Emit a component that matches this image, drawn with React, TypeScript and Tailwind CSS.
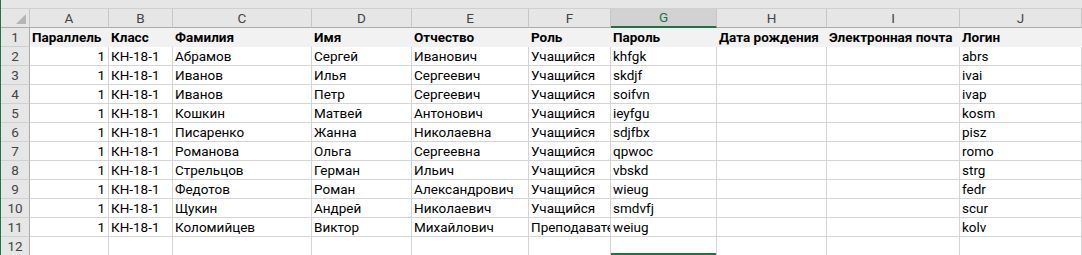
import React from 'react';

const cols = [
  { letter: 'A', w: 'w-[79px]', title: 'Параллель', right: true },
  { letter: 'B', w: 'w-[64px]', title: 'Класс' },
  { letter: 'C', w: 'w-[139px]', title: 'Фамилия' },
  { letter: 'D', w: 'w-[100px]', title: 'Имя' },
  { letter: 'E', w: 'w-[117px]', title: 'Отчество' },
  { letter: 'F', w: 'w-[82px]', title: 'Роль' },
  { letter: 'G', w: 'w-[106px]', title: 'Пароль', selected: true },
  { letter: 'H', w: 'w-[110px]', title: 'Дата рождения' },
  { letter: 'I', w: 'w-[133px]', title: 'Электронная почта' },
  { letter: 'J', w: 'w-[122px]', title: 'Логин' },
];

const rows = [
  ['1', 'КН-18-1', 'Абрамов', 'Сергей', 'Иванович', 'Учащийся', 'khfgk', '', '', 'abrs'],
  ['1', 'КН-18-1', 'Иванов', 'Илья', 'Сергеевич', 'Учащийся', 'skdjf', '', '', 'ivai'],
  ['1', 'КН-18-1', 'Иванов', 'Петр', 'Сергеевич', 'Учащийся', 'soifvn', '', '', 'ivap'],
  ['1', 'КН-18-1', 'Кошкин', 'Матвей', 'Антонович', 'Учащийся', 'ieyfgu', '', '', 'kosm'],
  ['1', 'КН-18-1', 'Писаренко', 'Жанна', 'Николаевна', 'Учащийся', 'sdjfbx', '', '', 'pisz'],
  ['1', 'КН-18-1', 'Романова', 'Ольга', 'Сергеевна', 'Учащийся', 'qpwoc', '', '', 'romo'],
  ['1', 'КН-18-1', 'Стрельцов', 'Герман', 'Ильич', 'Учащийся', 'vbskd', '', '', 'strg'],
  ['1', 'КН-18-1', 'Федотов', 'Роман', 'Александрович', 'Учащийся', 'wieug', '', '', 'fedr'],
  ['1', 'КН-18-1', 'Щукин', 'Андрей', 'Николаевич', 'Учащийся', 'smdvfj', '', '', 'scur'],
  ['1', 'КН-18-1', 'Коломийцев', 'Виктор', 'Михайлович', 'Преподаватель', 'weiug', '', '', 'kolv'],
  ['', '', '', '', '', '', '', '', '', ''],
];

function RowNum({ n }: { n: number }) {
  return (
    <div className="w-[29px] h-[19px] shrink-0 bg-[#e6e6e6] border-r border-b border-r-[#ababab] border-b-[#d0d0d0] text-center leading-[18px] text-[#444444]">
      {n}
    </div>
  );
}

export default function App() {
  return (
    <div className="w-[1082px] h-[255px] overflow-hidden bg-white border-l border-[#217346] font-['Roboto',sans-serif] text-[13.5px] text-black">
      {/* top strip */}
      <div className="h-[9px] bg-[#e6e6e6] border-b border-[#d0d0d0]" />

      {/* column letters */}
      <div className="flex h-[19px]">
        <div className="w-[29px] h-[19px] shrink-0 bg-[#e6e6e6] border-r border-b border-r-[#c6c6c6] border-b-[#ababab] flex items-end justify-end">
          <svg width="12" height="12" viewBox="0 0 12 12" className="mr-[2px] mb-[2px]">
            <polygon points="1,11 11,1 11,11" fill="#b5b5b5" />
          </svg>
        </div>
        {cols.map((c) =>
          c.selected ? (
            <div
              key={c.letter}
              className={`${c.w} h-[19px] shrink-0 bg-[#d2d2d2] border-r border-r-[#c6c6c6] border-b-2 border-b-[#217346] text-center leading-[17px] text-[#217346]`}
            >
              {c.letter}
            </div>
          ) : (
            <div
              key={c.letter}
              className={`${c.w} h-[19px] shrink-0 bg-[#e6e6e6] border-r border-b border-r-[#c6c6c6] border-b-[#ababab] text-center leading-[18px] text-[#444444]`}
            >
              {c.letter}
            </div>
          )
        )}
      </div>

      {/* header row 1 */}
      <div className="flex h-[19px]">
        <RowNum n={1} />
        {cols.map((c) => (
          <div
            key={c.letter}
            className={`${c.w} h-[19px] shrink-0 bg-[#f2f2f2] pl-[2px] font-bold leading-[19px] whitespace-nowrap overflow-hidden`}
          >
            {c.title}
          </div>
        ))}
      </div>

      {/* data rows */}
      {rows.map((r, i) => (
        <div key={i} className="flex h-[19px]">
          <RowNum n={i + 2} />
          {cols.map((c, j) => (
            <div
              key={c.letter}
              className={`${c.w} relative h-[19px] shrink-0 border-r border-b border-[#d4d4d4] leading-[18px] whitespace-nowrap overflow-hidden ${
                c.right ? 'text-right pr-[3px]' : 'pl-[2px]'
              }`}
            >
              {r[j]}
              {c.selected && i === rows.length - 1 && (
                <div className="absolute left-0 right-0 bottom-[-1px] h-[3px] bg-[#217346]" />
              )}
            </div>
          ))}
        </div>
      ))}
    </div>
  );
}
